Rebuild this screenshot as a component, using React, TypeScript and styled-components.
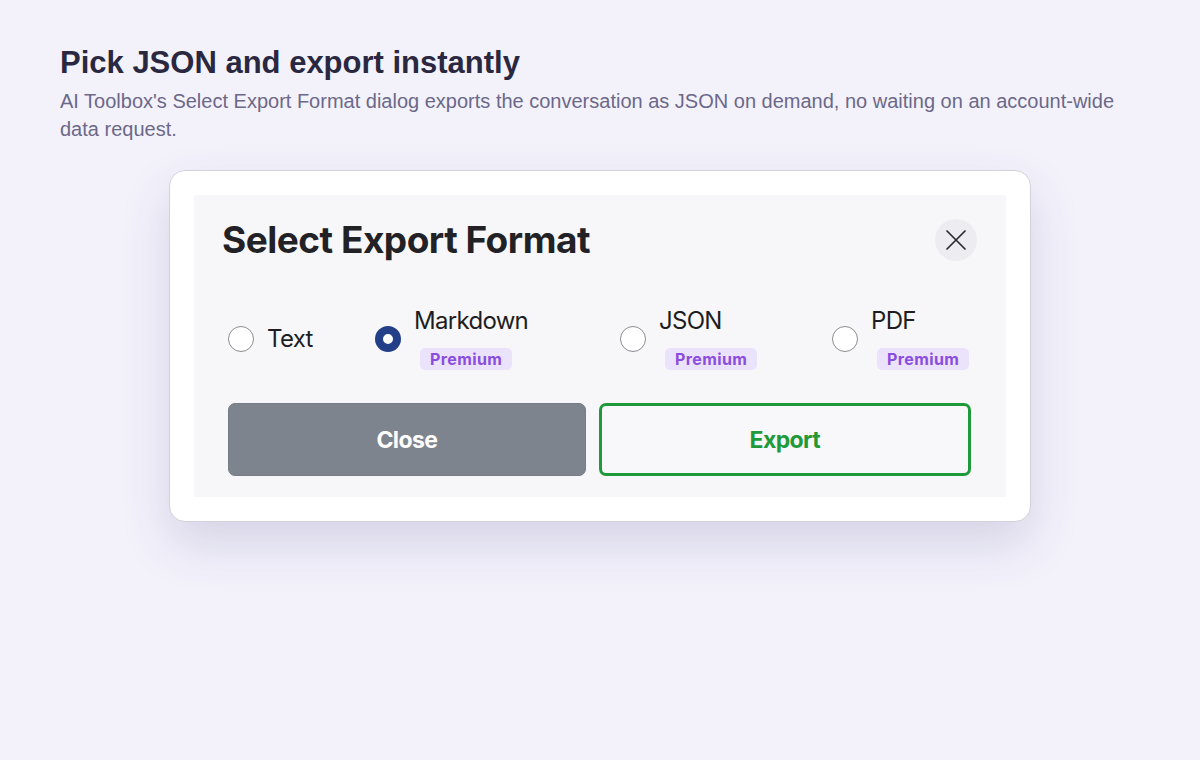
import styled, { createGlobalStyle } from "styled-components";
import { useState } from "react";

const GlobalStyle = createGlobalStyle`
    html, body {
        margin: 0;
        padding: 0;
        background: #f3f2fb;
    }
    * {
        box-sizing: border-box;
    }
`

const Page = styled.div`
    min-height: 760px;
    padding: 44px 60px 40px;
    font-family: "Liberation Sans", Arial, sans-serif;
`

const Heading = styled.h1`
    margin: 0;
    font-size: 31px;
    line-height: 38px;
    font-weight: 700;
    color: #2a2840;
`

const Lead = styled.p`
    margin: 5px 0 0;
    font-size: 20px;
    line-height: 28px;
    color: #6c6889;
`

const Card = styled.div`
    width: 862px;
    margin: 27px auto 0;
    padding: 24px;
    background: #fff;
    border: 1px solid #d3d2dc;
    border-radius: 16px;
    box-shadow: 0 22px 50px rgba(60, 50, 120, 0.16);
`

const Panel = styled.div`
    background: #f7f7f9;
    padding: 24px 29px 21px 28px;
    font-family: Inter, "Noto Sans", sans-serif;
`

const Header = styled.div`
    display: flex;
    align-items: center;
    justify-content: space-between;
`

const Title = styled.h2`
    margin: 0;
    font-size: 37px;
    line-height: 42px;
    font-weight: 700;
    letter-spacing: -0.5px;
    color: #222226;
`

const CloseIcon = styled.button`
    width: 42px;
    height: 42px;
    border: none;
    border-radius: 50%;
    background: #ededf1;
    display: flex;
    align-items: center;
    justify-content: center;
    padding: 0;
    cursor: pointer;
`

const Options = styled.div`
    display: grid;
    grid-template-columns: 147px 245px 212px auto;
    align-items: center;
    margin-top: 46px;
    padding: 0 6px;
`

const Option = styled.label`
    display: flex;
    align-items: center;
    gap: 13px;
    cursor: pointer;
`

const Radio = styled.span<{ $checked: boolean }>`
    width: 26px;
    height: 26px;
    border-radius: 50%;
    flex-shrink: 0;
    background: #fff;
    border: ${p => p.$checked ? "8.5px solid #233f88" : "1.5px solid #8d8d92"};
`

const LabelStack = styled.div`
    display: flex;
    flex-direction: column;
    align-items: flex-start;
`

const LabelText = styled.span`
    font-size: 24px;
    line-height: 28px;
    letter-spacing: -0.7px;
    color: #1e1e22;
`

const Badge = styled.span`
    margin: 13px 0 0 6px;
    padding: 0 10px;
    height: 22px;
    display: inline-flex;
    align-items: center;
    border-radius: 5px;
    background: #ebe3fb;
    color: #8b4ce0;
    font-size: 16px;
    font-weight: 700;
    letter-spacing: 0.4px;
`

const Actions = styled.div`
    display: flex;
    gap: 13px;
    margin-top: 33px;
    padding: 0 6px;
`

const ActionButton = styled.button<{ $primary?: boolean }>`
    flex: ${p => p.$primary ? 370 : 359};
    height: 73px;
    border-radius: 7px;
    font-family: Inter, "Noto Sans", sans-serif;
    font-size: 23px;
    font-weight: 700;
    letter-spacing: -0.6px;
    cursor: pointer;
    background: ${p => p.$primary ? "#f8f8fa" : "#7e848e"};
    color: ${p => p.$primary ? "#1e9a3b" : "#fff"};
    border: ${p => p.$primary ? "3px solid #1e9a3b" : "1px solid #777c86"};
`

interface IFormat {
    id: string,
    name: string,
    premium: boolean
}

const formats: IFormat[] = [
    { id: "text", name: "Text", premium: false },
    { id: "md", name: "Markdown", premium: true },
    { id: "json", name: "JSON", premium: true },
    { id: "pdf", name: "PDF", premium: true },
]

export default function App() {
    const [selected, setSelected] = useState("md");

    return (
        <Page>
            <GlobalStyle />
            <Heading>Pick JSON and export instantly</Heading>
            <Lead>
                AI Toolbox's Select Export Format dialog exports the conversation as JSON on demand, no waiting on an account-wide data request.
            </Lead>
            <Card>
                <Panel>
                    <Header>
                        <Title>Select Export Format</Title>
                        <CloseIcon aria-label="Close">
                            <svg width="20" height="20" viewBox="0 0 20 20">
                                <path d="M1 1 L19 19 M19 1 L1 19" stroke="#2b2b2f" strokeWidth="1.7" strokeLinecap="round" />
                            </svg>
                        </CloseIcon>
                    </Header>
                    <Options>
                        {formats.map(f => (
                            <Option key={f.id} onClick={() => setSelected(f.id)}>
                                <Radio $checked={selected === f.id} />
                                <LabelStack>
                                    <LabelText>{f.name}</LabelText>
                                    {f.premium && <Badge>Premium</Badge>}
                                </LabelStack>
                            </Option>
                        ))}
                    </Options>
                    <Actions>
                        <ActionButton>Close</ActionButton>
                        <ActionButton $primary>Export</ActionButton>
                    </Actions>
                </Panel>
            </Card>
        </Page>
    )
}
